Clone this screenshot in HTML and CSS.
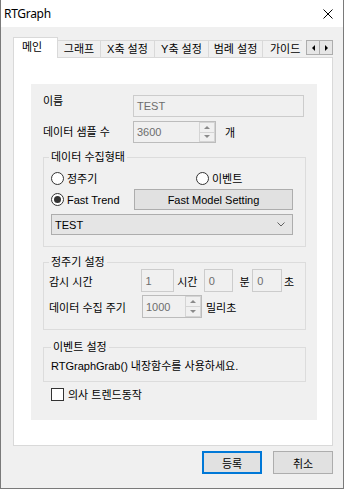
FILE: index.html
```html
<!DOCTYPE html>
<html lang="ko">
<head>
    <meta charset="UTF-8">
    <title>RTGraph</title>
    <link rel="stylesheet" href="styles.css">
</head>
<body>
    <div class="window">
        <div class="titlebar">
            <span class="title">RTGraph</span>
            <svg class="close" width="10" height="10" viewBox="0 0 10 10"><path d="M0.5 0.5L9.5 9.5M9.5 0.5L0.5 9.5" stroke="#000" stroke-width="1"/></svg>
        </div>

        <div class="client">
            <div class="tabs">
                <div class="tab-clip">
                    <div class="tab active">메인</div>
                    <div class="tab w44">그래프</div>
                    <div class="tab">X축 설정</div>
                    <div class="tab">Y축 설정</div>
                    <div class="tab">범례 설정</div>
                    <div class="tab tab-last">가이드</div>
                </div>
                <div class="tab-scroll">
                    <span class="scroll-btn"><i class="tri-left"></i></span>
                    <span class="scroll-btn"><i class="tri-right"></i></span>
                </div>
            </div>

            <div class="page">
                <div class="panel">
                    <div class="row">
                        <span class="lbl lbl-top">이름</span>
                        <div class="edit w171">TEST</div>
                    </div>
                    <div class="row">
                        <span class="lbl">데이터 샘플 수</span>
                        <div class="spin w83">
                            <span class="spin-val">3600</span>
                            <span class="spin-btns"><span><i class="tri-up"></i></span><span><i class="tri-down"></i></span></span>
                        </div>
                        <span class="unit-gae">개</span>
                    </div>

                    <fieldset class="group g-collect">
                        <legend>데이터 수집형태</legend>
                        <div class="inner">
                            <div class="radio-row">
                                <label class="radio w145"><span class="circle"></span>정주기</label>
                                <label class="radio"><span class="circle"></span>이벤트</label>
                            </div>
                            <div class="radio-row tall">
                                <label class="radio w83"><span class="circle on"></span>Fast Trend</label>
                                <button class="btn w159">Fast Model Setting</button>
                            </div>
                            <div class="combo">
                                <span>TEST</span>
                                <svg width="8" height="5" viewBox="0 0 8 5"><path d="M0.5 0.5L4 4L7.5 0.5" fill="none" stroke="#606060" stroke-width="1"/></svg>
                            </div>
                        </div>
                    </fieldset>

                    <fieldset class="group g-period">
                        <legend>정주기 설정</legend>
                        <div class="prow">
                            <span class="lbl2">감시 시간</span>
                            <div class="edit w34">1</div>
                            <span class="unit u-hour">시간</span>
                            <div class="edit w30">0</div>
                            <span class="unit u-min">분</span>
                            <div class="edit w30">0</div>
                            <span class="unit u-sec">초</span>
                        </div>
                        <div class="prow">
                            <span class="lbl2">데이터 수집 주기</span>
                            <div class="spin w60">
                                <span class="spin-val">1000</span>
                                <span class="spin-btns"><span><i class="tri-up"></i></span><span><i class="tri-down"></i></span></span>
                            </div>
                            <span class="unit u-ms">밀리초</span>
                        </div>
                    </fieldset>

                    <fieldset class="group g-event">
                        <legend>이벤트 설정</legend>
                        <div class="event-text">RTGraphGrab() 내장함수를 사용하세요.</div>
                    </fieldset>

                    <label class="check"><span class="box"></span>의사 트렌드동작</label>
                </div>
            </div>

            <div class="footer">
                <button class="btn btn-foot btn-default">등록</button>
                <button class="btn btn-foot">취소</button>
            </div>
        </div>
    </div>
</body>
</html>
```

FILE: styles.css
```css
body {
    margin: 0;
    font-family: "Liberation Sans", "Noto Sans CJK KR", sans-serif;
    font-size: 11px;
    color: #000000;
}

.window {
    width: 344px;
    height: 489px;
    box-sizing: border-box;
    border: 1px solid #7a7a7a;
    border-top: none;
    background-color: #f0f0f0;
    display: flex;
    flex-direction: column;
}

.titlebar {
    height: 27px;
    flex-shrink: 0;
    background-color: #ffffff;
    display: flex;
    align-items: center;
    padding-left: 3px;
}

.title {
    font-family: "Noto Sans", sans-serif;
    font-size: 12px;
    letter-spacing: -0.3px;
}

.close {
    margin-left: auto;
    margin-right: 10px;
}

.client {
    padding: 10px 10px 0 12px;
}

/* tab strip */
.tabs {
    display: flex;
    align-items: flex-start;
    height: 21px;
    margin-bottom: -1px;
    position: relative;
    z-index: 1;
}

.tab-clip {
    width: 289px;
    height: 21px;
    display: flex;
    align-items: flex-end;
    overflow: hidden;
}

.tab {
    flex-shrink: 0;
    width: 55px;
    height: 17px;
    margin-bottom: 1px;
    margin-left: -1px;
    box-sizing: border-box;
    border: 1px solid #d9d9d9;
    border-bottom: none;
    background-color: #f0f0f0;
    display: flex;
    align-items: center;
    justify-content: center;
    line-height: 14px;
}

.tab.w44 {
    width: 44px;
}

.tab.tab-last {
    justify-content: flex-start;
    padding-left: 7px;
}

.tab.active {
    width: 45px;
    height: 21px;
    margin: 0;
    background-color: #ffffff;
    padding: 0 7px 3px 0;
}

.tab-scroll {
    display: flex;
    margin: 3px 0 0 4px;
}

.scroll-btn {
    width: 14px;
    height: 15px;
    box-sizing: border-box;
    border: 1px solid #adadad;
    background-color: #e6e6e6;
    display: flex;
    align-items: center;
    justify-content: center;
}

.scroll-btn + .scroll-btn {
    margin-left: -1px;
}

.tri-left {
    border-top: 3px solid transparent;
    border-bottom: 3px solid transparent;
    border-right: 3px solid #000;
}

.tri-right {
    border-top: 3px solid transparent;
    border-bottom: 3px solid transparent;
    border-left: 3px solid #000;
}

/* page */
.page {
    width: 320px;
    height: 389px;
    box-sizing: border-box;
    border: 1px solid #d9d9d9;
    background-color: #ffffff;
    padding: 26px 0 0 17px;
}

.panel {
    width: 286px;
    height: 336px;
    box-sizing: border-box;
    background-color: #f0f0f0;
    padding: 11px 0 0 12px;
}

.row {
    display: flex;
    align-items: center;
    height: 22px;
}

.row + .row {
    margin-top: 4px;
}

.lbl {
    width: 90px;
    line-height: 14px;
}

.lbl-top {
    align-self: flex-start;
    margin-top: -1px;
}

.edit {
    height: 22px;
    box-sizing: border-box;
    border: 1px solid #cccccc;
    background-color: #f0f0f0;
    color: #6d6d6d;
    padding-left: 3px;
    display: flex;
    align-items: center;
}

.w171 { width: 171px; }
.w34 { width: 34px; padding-left: 4px; }
.w30 { width: 30px; padding-left: 4px; }

.spin {
    height: 22px;
    box-sizing: border-box;
    border: 1px solid #bcbcbc;
    background-color: #f0f0f0;
    display: flex;
}

.w83 { width: 83px; }
.w60 { width: 60px; }

.spin-val {
    flex: 1;
    color: #6d6d6d;
    padding-left: 3px;
    display: flex;
    align-items: center;
}

.spin-btns {
    width: 16px;
    display: flex;
    flex-direction: column;
}

.spin-btns span {
    flex: 1;
    border: 1px solid #d4d4d4;
    display: flex;
    align-items: center;
    justify-content: center;
}

.spin-btns span + span {
    border-top: none;
}

.tri-up {
    border-left: 3px solid transparent;
    border-right: 3px solid transparent;
    border-bottom: 3px solid #8a8a8a;
}

.tri-down {
    border-left: 3px solid transparent;
    border-right: 3px solid transparent;
    border-top: 3px solid #8a8a8a;
}

.unit-gae {
    margin-left: 9px;
}

/* group boxes */
.group {
    margin: 0;
    width: 263px;
    box-sizing: border-box;
    min-width: 0;
    border: 1px solid #dcdcdc;
    padding: 0 11px 11px 5px;
}

.group legend {
    padding: 0 2px;
    line-height: 14px;
}

.g-collect {
    margin-top: 7px;
    padding-top: 6px;
}

.inner {
    margin-left: 2px;
}

.radio-row {
    display: flex;
    align-items: center;
    height: 16px;
}

.radio-row.tall {
    height: 21px;
    margin-top: 3px;
}

.radio {
    display: flex;
    align-items: center;
}

.w145 { width: 145px; }

.circle {
    width: 13px;
    height: 13px;
    box-sizing: border-box;
    border: 1px solid #333333;
    border-radius: 50%;
    background-color: #ffffff;
    margin-right: 3px;
    display: flex;
    align-items: center;
    justify-content: center;
}

.circle.on::after {
    content: "";
    width: 7px;
    height: 7px;
    border-radius: 50%;
    background-color: #333333;
}

.btn {
    font-family: "Liberation Sans", "Noto Sans CJK KR", sans-serif;
    font-size: 11px;
    color: #000000;
    background-color: #e1e1e1;
    border: 1px solid #adadad;
    padding: 0;
    box-sizing: border-box;
}

.w159 {
    width: 159px;
    height: 21px;
}

.combo {
    width: 242px;
    height: 21px;
    margin-top: 4px;
    box-sizing: border-box;
    border: 1px solid #adadad;
    background-color: #e5e5e5;
    display: flex;
    align-items: center;
    justify-content: space-between;
    padding: 0 7px 0 3px;
}

.g-period {
    margin-top: 8px;
}

.prow {
    display: flex;
    align-items: center;
    height: 23px;
}

.prow + .prow {
    margin-top: 3px;
}

.prow .edit,
.prow .spin {
    height: 23px;
}

.lbl2 {
    width: 93px;
}

.u-hour { margin-left: 3px; width: 27px; }
.u-min { margin-left: 6px; width: 13px; }
.u-sec { margin-left: 2px; }
.u-ms { margin-left: 4px; }

.g-event {
    margin-top: 10px;
    padding: 5px 11px 8px 7px;
}

.event-text {
    line-height: 14px;
}

.check {
    display: flex;
    align-items: center;
    height: 14px;
    margin: 5px 0 0 8px;
}

.box {
    width: 13px;
    height: 13px;
    box-sizing: border-box;
    border: 1px solid #333333;
    background-color: #ffffff;
    margin-right: 4px;
}

/* footer */
.footer {
    display: flex;
    justify-content: flex-end;
    gap: 11px;
    margin-top: 5px;
}

.btn-foot {
    width: 60px;
    height: 23px;
}

.btn-default {
    border: 2px solid #0078d7;
}
```
